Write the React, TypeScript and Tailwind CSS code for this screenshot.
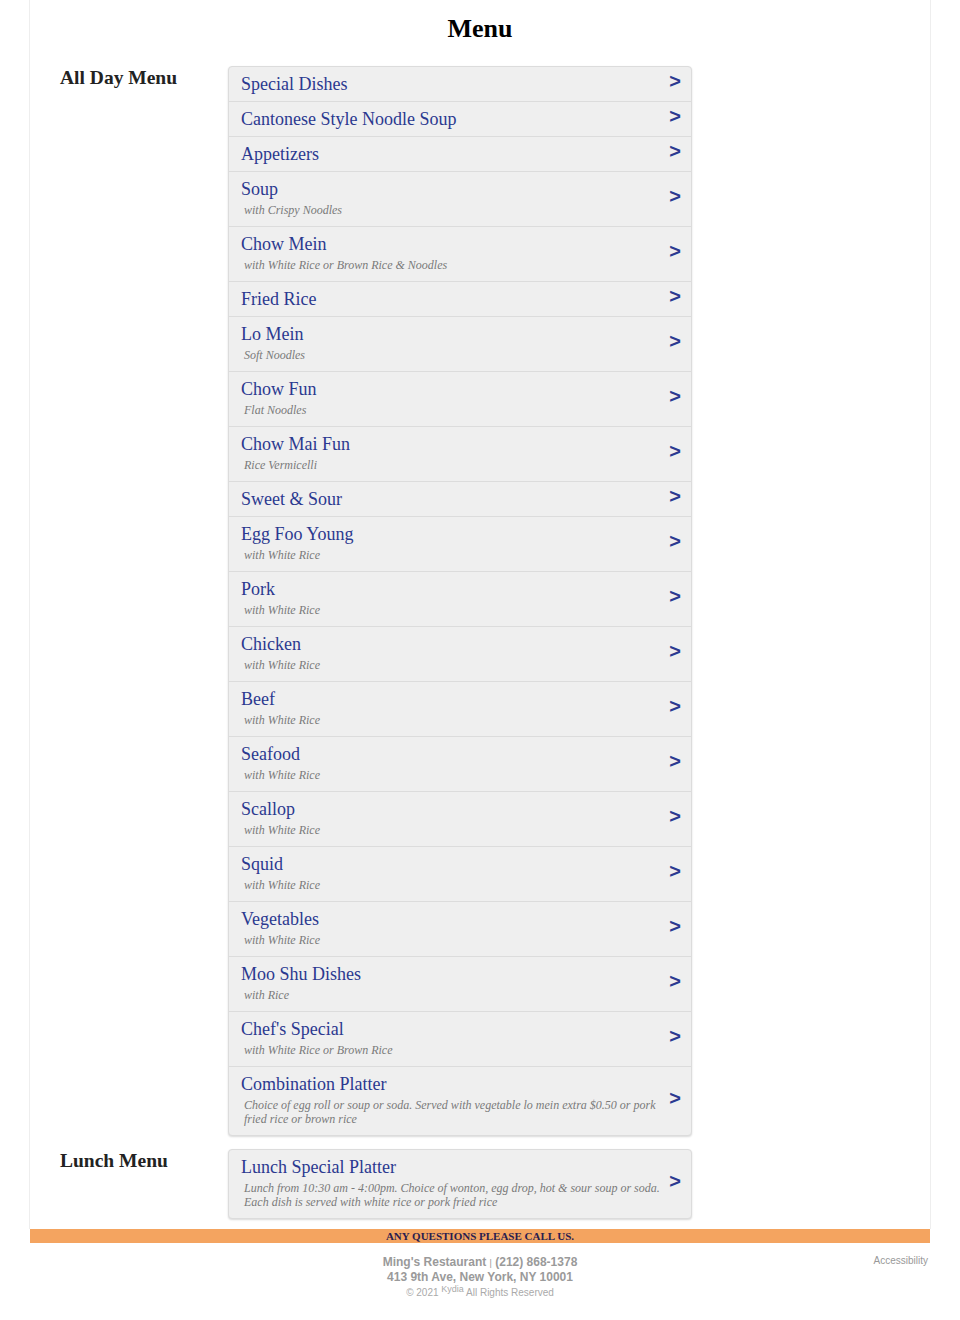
import React from 'react'

type Item = { name: string; sub?: string }

const allDay: Item[] = [
  { name: 'Special Dishes' },
  { name: 'Cantonese Style Noodle Soup' },
  { name: 'Appetizers' },
  { name: 'Soup', sub: 'with Crispy Noodles' },
  { name: 'Chow Mein', sub: 'with White Rice or Brown Rice & Noodles' },
  { name: 'Fried Rice' },
  { name: 'Lo Mein', sub: 'Soft Noodles' },
  { name: 'Chow Fun', sub: 'Flat Noodles' },
  { name: 'Chow Mai Fun', sub: 'Rice Vermicelli' },
  { name: 'Sweet & Sour' },
  { name: 'Egg Foo Young', sub: 'with White Rice' },
  { name: 'Pork', sub: 'with White Rice' },
  { name: 'Chicken', sub: 'with White Rice' },
  { name: 'Beef', sub: 'with White Rice' },
  { name: 'Seafood', sub: 'with White Rice' },
  { name: 'Scallop', sub: 'with White Rice' },
  { name: 'Squid', sub: 'with White Rice' },
  { name: 'Vegetables', sub: 'with White Rice' },
  { name: 'Moo Shu Dishes', sub: 'with Rice' },
  { name: "Chef's Special", sub: 'with White Rice or Brown Rice' },
  {
    name: 'Combination Platter',
    sub: 'Choice of egg roll or soup or soda. Served with vegetable lo mein extra $0.50 or pork fried rice or brown rice',
  },
]

const lunch: Item[] = [
  {
    name: 'Lunch Special Platter',
    sub: 'Lunch from 10:30 am - 4:00pm. Choice of wonton, egg drop, hot & sour soup or soda. Each dish is served with white rice or pork fried rice',
  },
]

function Row({ item, last }: { item: Item; last: boolean }) {
  return (
    <div className={'flex items-center pl-[12px] pr-[10px] py-[6px] ' + (last ? '' : 'border-b border-[#dcdcdc]')}>
      <div className="flex-1 min-w-0">
        <div className="text-[18px] leading-[22px] text-[#2b3990] font-['Liberation_Serif',serif]">{item.name}</div>
        {item.sub && (
          <div className="ml-[3px] py-[3px] pr-[4px] text-[12px] leading-[14px] italic text-[#7a7a7a] font-['Liberation_Serif',serif]">
            {item.sub}
          </div>
        )}
      </div>
      <div className="relative -top-[3px] text-[20px] leading-[20px] font-bold text-[#2b3990] font-['Liberation_Sans',sans-serif]">
        &gt;
      </div>
    </div>
  )
}

function Section({ title, items }: { title: string; items: Item[] }) {
  return (
    <div className="flex px-[30px]">
      <h2 className="w-[168px] pt-[1px] text-[19.5px] leading-[22px] font-bold text-[#222] font-['Liberation_Serif',serif]">
        {title}
      </h2>
      <div className="w-[464px] rounded-[4px] border border-[#dcdcdc] bg-[#efefef] shadow-[0_1px_2px_rgba(0,0,0,0.15)]">
        {items.map((it, i) => (
          <Row key={it.name} item={it} last={i === items.length - 1} />
        ))}
      </div>
    </div>
  )
}

export default function App() {
  return (
    <div className="bg-white min-h-[1320px]">
      <div className="w-[902px] mx-auto border-x border-[#eeeeee] pb-[10px]">
        <h1 className="pt-[14px] pb-[22px] text-center text-[26px] leading-[30px] font-bold text-black font-['Liberation_Serif',serif]">
          Menu
        </h1>
        <div className="flex flex-col gap-[13px]">
          <Section title="All Day Menu" items={allDay} />
          <Section title="Lunch Menu" items={lunch} />
        </div>
      </div>
      <div className="w-[900px] mx-auto bg-[#f4a460] h-[14px] text-center text-[11px] leading-[14px] font-bold text-[#2a1d4f] font-['Liberation_Serif',serif]">
        ANY QUESTIONS PLEASE CALL US.
      </div>
      <div className="w-[900px] mx-auto grid grid-cols-[1fr_auto_1fr] pt-[12px] font-['Liberation_Sans',sans-serif]">
        <div />
        <div className="text-center">
          <div className="text-[12px] leading-[14px] font-bold text-[#9a9a9a]">
            Ming's Restaurant <span className="text-[9px] font-normal">|</span> (212) 868-1378
          </div>
          <div className="text-[12px] leading-[14px] font-bold text-[#9a9a9a]">413 9th Ave, New York, NY 10001</div>
          <div className="mt-[2px] text-[10px] leading-[14px] text-[#aaa]">
            © 2021 <sup className="text-[9px]">Kydia</sup> All Rights Reserved
          </div>
        </div>
        <div className="text-right pr-[2px] text-[10px] leading-[12px] text-[#999]">Accessibility</div>
      </div>
    </div>
  )
}
